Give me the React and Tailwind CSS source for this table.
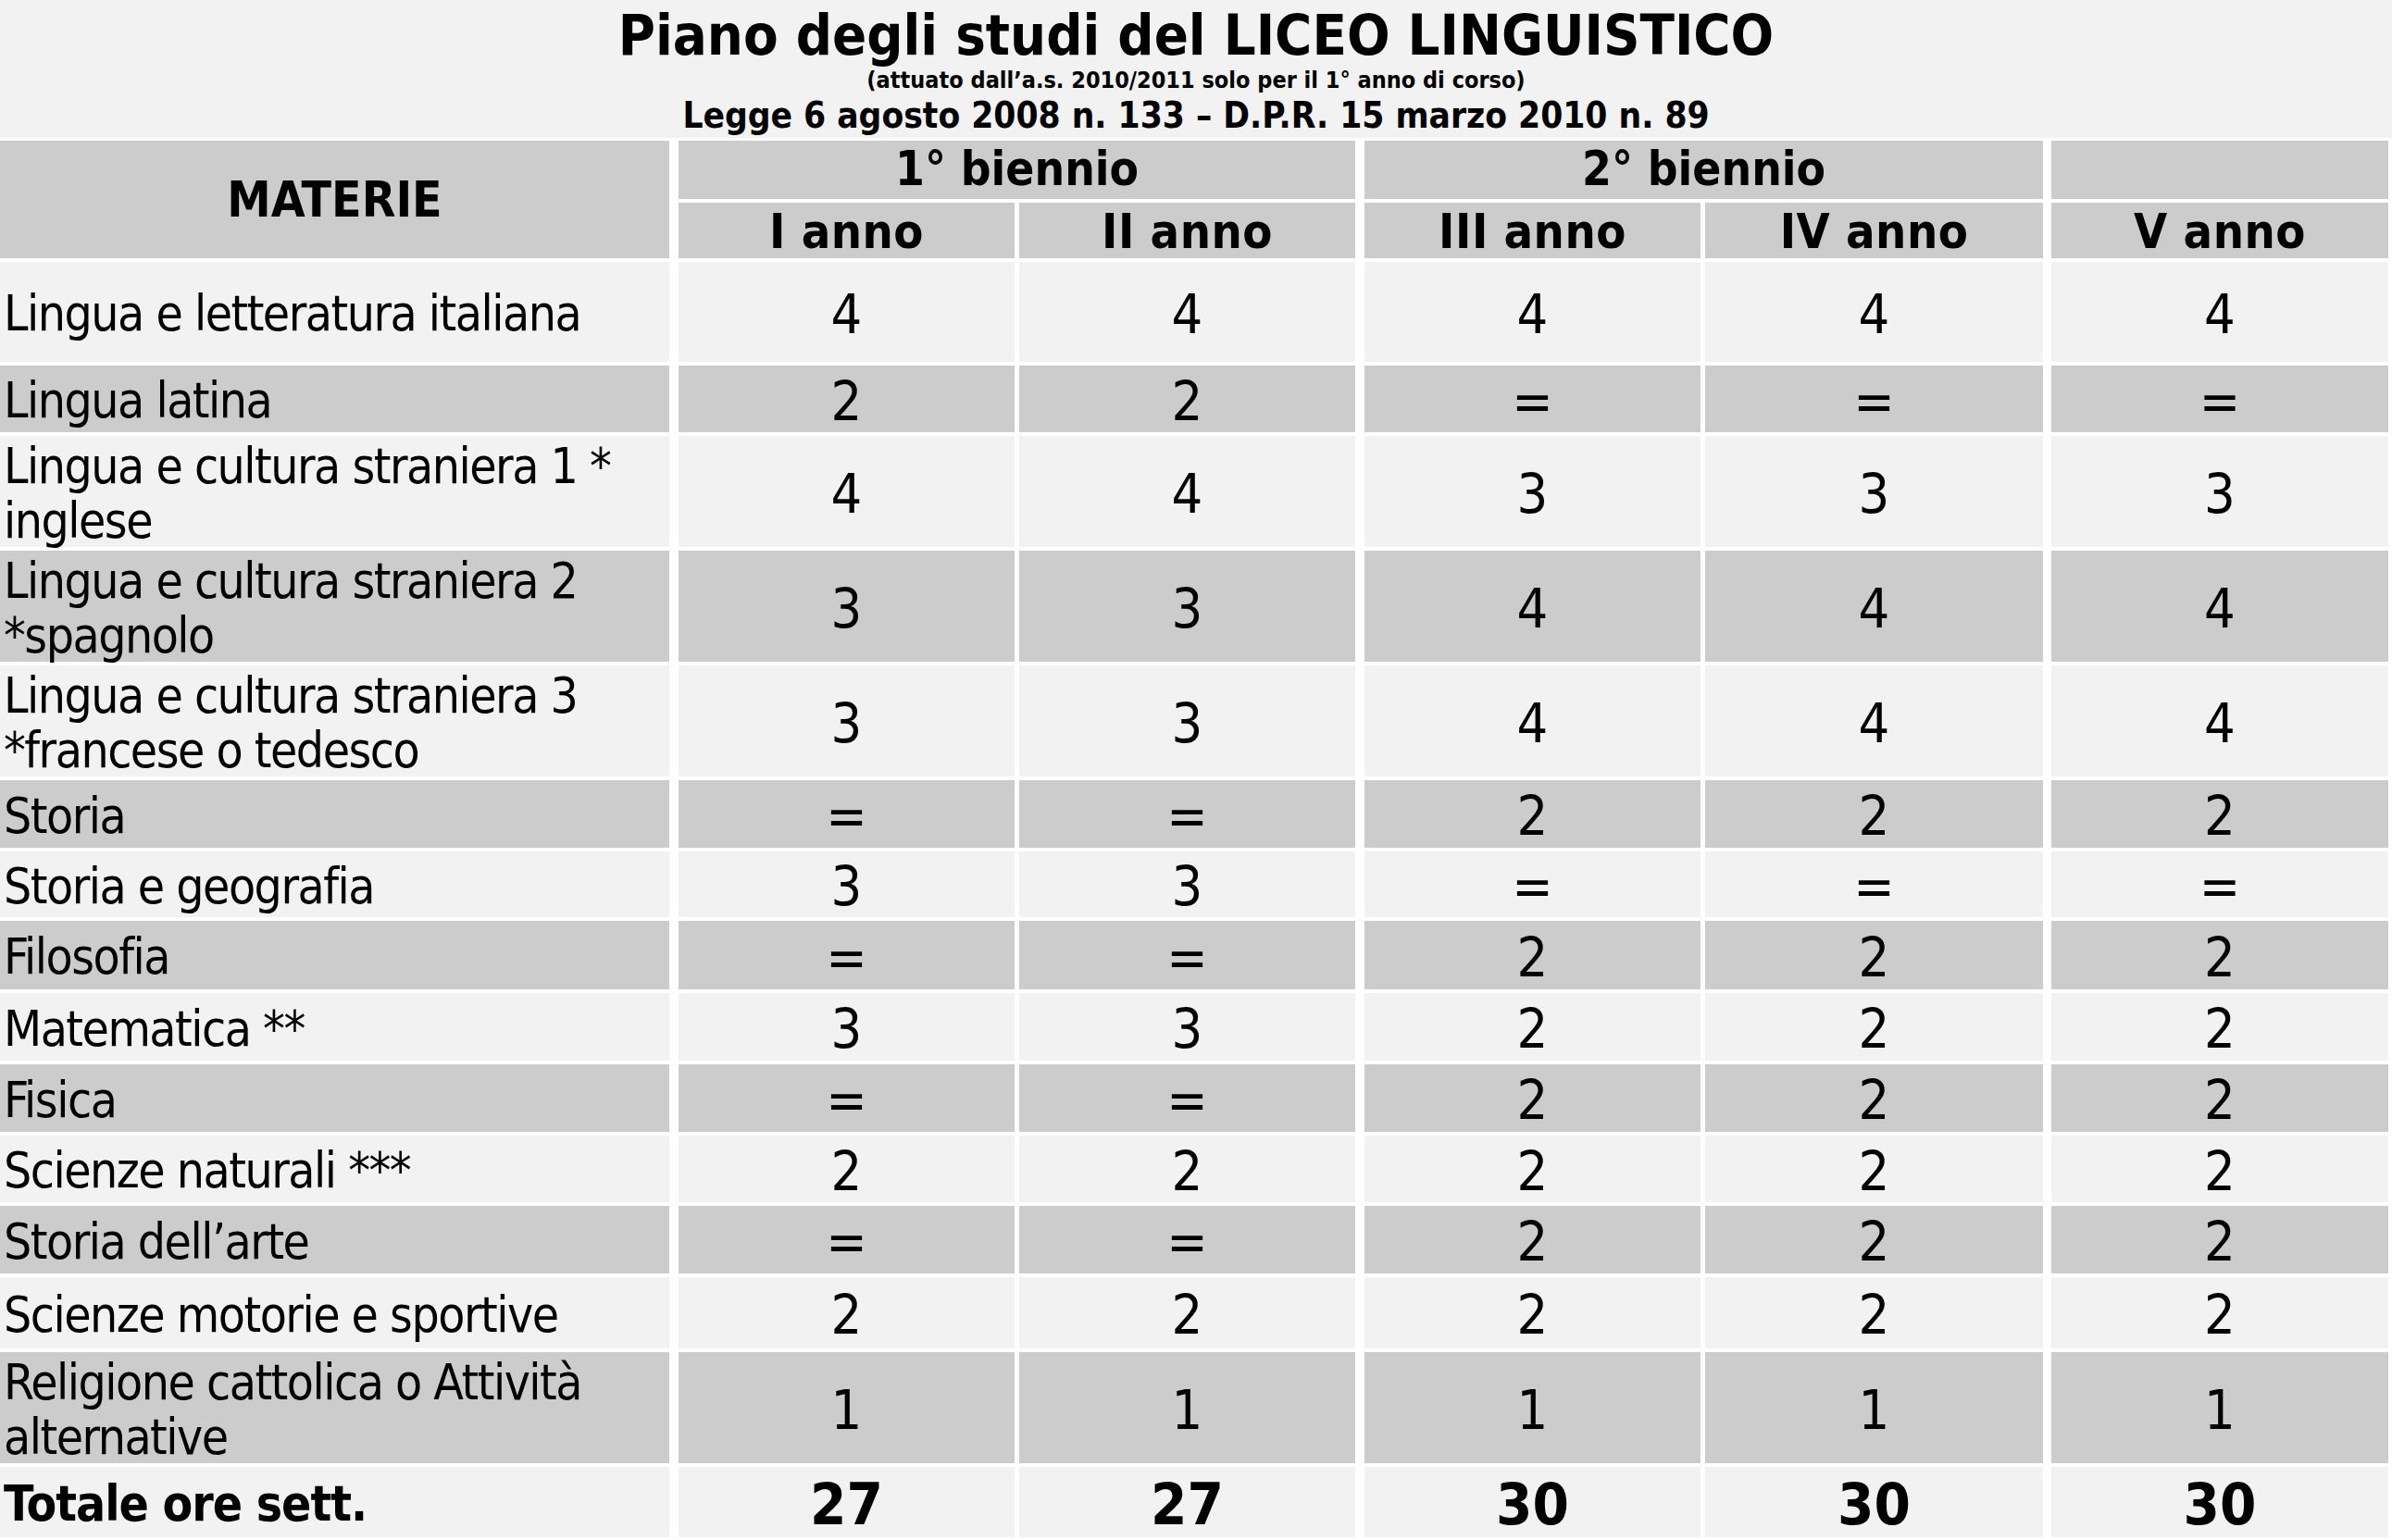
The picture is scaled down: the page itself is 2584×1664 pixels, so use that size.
import React from "react";

const rows = [
  { name: ["Lingua e letteratura italiana"], v: ["4", "4", "4", "4", "4"], bg: "bg-[#f2f2f2]" },
  { name: ["Lingua latina"], v: ["2", "2", "=", "=", "="], bg: "bg-[#cccccc]" },
  { name: ["Lingua e cultura straniera 1 *", "inglese"], v: ["4", "4", "3", "3", "3"], bg: "bg-[#f2f2f2]" },
  { name: ["Lingua e cultura straniera 2", "*spagnolo"], v: ["3", "3", "4", "4", "4"], bg: "bg-[#cccccc]" },
  { name: ["Lingua e cultura straniera 3", "*francese o tedesco"], v: ["3", "3", "4", "4", "4"], bg: "bg-[#f2f2f2]" },
  { name: ["Storia"], v: ["=", "=", "2", "2", "2"], bg: "bg-[#cccccc]" },
  { name: ["Storia e geografia"], v: ["3", "3", "=", "=", "="], bg: "bg-[#f2f2f2]" },
  { name: ["Filosofia"], v: ["=", "=", "2", "2", "2"], bg: "bg-[#cccccc]" },
  { name: ["Matematica **"], v: ["3", "3", "2", "2", "2"], bg: "bg-[#f2f2f2]" },
  { name: ["Fisica"], v: ["=", "=", "2", "2", "2"], bg: "bg-[#cccccc]" },
  { name: ["Scienze naturali ***"], v: ["2", "2", "2", "2", "2"], bg: "bg-[#f2f2f2]" },
  { name: ["Storia dell’arte"], v: ["=", "=", "2", "2", "2"], bg: "bg-[#cccccc]" },
  { name: ["Scienze motorie e sportive"], v: ["2", "2", "2", "2", "2"], bg: "bg-[#f2f2f2]" },
  { name: ["Religione cattolica o Attività", "alternative"], v: ["1", "1", "1", "1", "1"], bg: "bg-[#cccccc]" },
];

// extra left offset so the white rule between year groups is thicker
const colShift = ["ml-[5px]", "", "ml-[5px]", "", "ml-[4px]"];

function App() {
  return (
    <div className="w-[2584px] min-h-screen bg-[#f2f2f2] text-black font-['DejaVu_Sans_Condensed','DejaVu_Sans',sans-serif]">
      <div className="h-[149px] flex flex-col items-center font-bold">
        <h1 className="mt-[4px] text-[61px] leading-[68px]">
          Piano degli studi del LICEO LINGUISTICO
        </h1>
        <p className="text-[25px] leading-[30px]">
          (attuato dall’a.s. 2010/2011 solo per il 1° anno di corso)
        </p>
        <p className="text-[38.5px] leading-[46px]">
          Legge 6 agosto 2008 n. 133 – D.P.R. 15 marzo 2010 n. 89
        </p>
      </div>

      <div className="grid grid-cols-[723px_368px_363px_368px_365px_368px] grid-rows-[63px_60px_108px_72px_120px_120px_120px_73px_71px_74px_73px_73px_72px_73px_77px_120px_76px] gap-x-[5px] gap-y-[4px] bg-white pt-[3px] pr-[4px] pb-[3px]">
        <div className="row-span-2 bg-[#cccccc] flex items-center justify-center font-bold text-[53px]">
          MATERIE
        </div>
        <div className="col-span-2 ml-[5px] bg-[#cccccc] flex items-center justify-center font-bold text-[51px]">
          1° biennio
        </div>
        <div className="col-span-2 ml-[5px] bg-[#cccccc] flex items-center justify-center font-bold text-[51px]">
          2° biennio
        </div>
        <div className="ml-[4px] bg-[#cccccc]"></div>
        {["I anno", "II anno", "III anno", "IV anno", "V anno"].map((t, i) => (
          <div
            key={t}
            className={`${colShift[i]} bg-[#cccccc] flex items-center justify-center pt-[2px] font-bold text-[52px] tracking-[0.5px]`}
          >
            {t}
          </div>
        ))}

        {rows.map((r) => (
          <React.Fragment key={r.name[0]}>
            <div className={`${r.bg} flex flex-col justify-center pl-[4px] pt-[3px] text-[53px] leading-[59px] tracking-[-1.5px]`}>
              {r.name.map((line) => (
                <span key={line}>{line}</span>
              ))}
            </div>
            {r.v.map((val, i) => (
              <div
                key={i}
                className={`${colShift[i]} ${r.bg} flex items-center justify-center pt-[6px] text-[59px]`}
              >
                {val}
              </div>
            ))}
          </React.Fragment>
        ))}

        <div className="bg-[#f2f2f2] flex items-center pl-[4px] pt-[3px] font-bold text-[53px] tracking-[-1px]">
          Totale ore sett.
        </div>
        {["27", "27", "30", "30", "30"].map((val, i) => (
          <div
            key={i}
            className={`${colShift[i]} bg-[#f2f2f2] flex items-center justify-center pt-[6px] font-bold text-[63px]`}
          >
            {val}
          </div>
        ))}
      </div>
    </div>
  );
}

export default App;
